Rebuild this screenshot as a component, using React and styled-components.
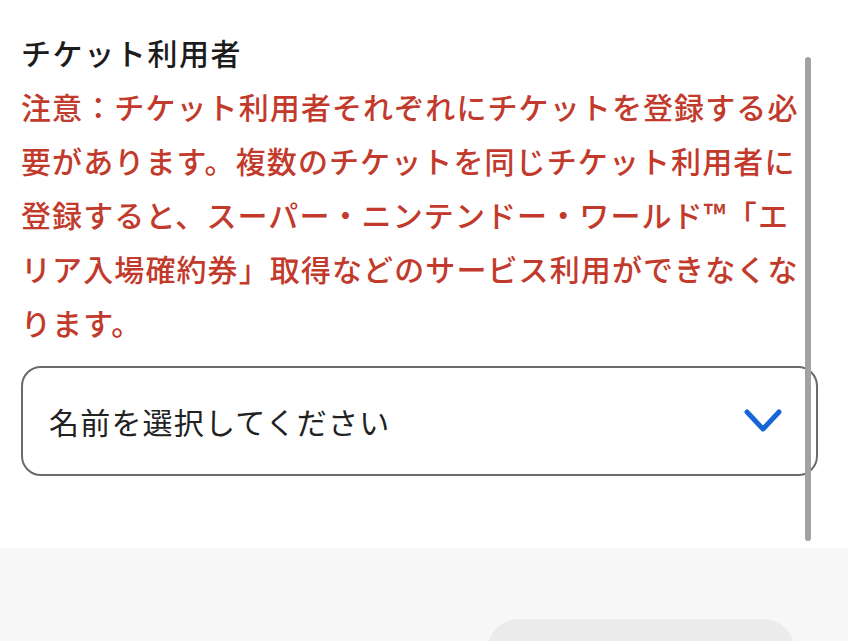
import React from 'react';
import styled, { createGlobalStyle } from 'styled-components';

const GlobalStyle = createGlobalStyle`
    html, body {
        margin: 0;
        padding: 0;
        background: #ffffff;
    }
    body {
        font-family: "Noto Sans CJK JP", "Noto Sans", sans-serif;
    }
`;

const Page = styled.div`
    display: flex;
    flex-direction: column;
    height: 641px;
    overflow: hidden;
`;

const Content = styled.section`
    position: relative;
    display: flex;
    flex-direction: column;
    padding: 25px 30px 72px 21px;
    background: #ffffff;
`;

const Heading = styled.h2`
    margin: 0;
    font-size: 30px;
    line-height: 54px;
    font-weight: 500;
    letter-spacing: 1.6px;
    color: #1c1c1c;
`;

const Notice = styled.p`
    margin: 0;
    font-size: 30px;
    line-height: 54px;
    font-weight: 500;
    letter-spacing: 1.1px;
    color: #c23a2b;
    white-space: nowrap;
`;

const Select = styled.button`
    display: flex;
    align-items: center;
    justify-content: space-between;
    margin-top: 17px;
    height: 110px;
    padding: 0 34px 0 26px;
    border: 2px solid #6a6a6a;
    border-radius: 20px;
    background: #ffffff;
    font-family: inherit;
    font-size: 30px;
    letter-spacing: 1.2px;
    color: #222222;
    cursor: pointer;
    text-align: left;
`;

const Chevron = styled.svg`
    width: 38px;
    height: 26px;
    flex-shrink: 0;
`;

const Scrollbar = styled.div`
    position: absolute;
    top: 57px;
    right: 37px;
    width: 6px;
    height: 484px;
    border-radius: 3px;
    background: #a2a2a2;
`;

const Footer = styled.footer`
    flex: 1;
    display: flex;
    justify-content: flex-end;
    padding: 71px 53px 0 0;
    background: #f7f7f7;
`;

const FooterButton = styled.div`
    width: 308px;
    height: 64px;
    border-radius: 32px;
    background: #ebebeb;
`;

const App = () => {
    return (
        <Page>
            <GlobalStyle />
            <Content>
                <Heading>チケット利用者</Heading>
                <Notice>
                    注意：チケット利用者それぞれにチケットを登録する必<br />
                    要があります。複数のチケットを同じチケット利用者に<br />
                    登録すると、スーパー・ニンテンドー・ワールド™「エ<br />
                    リア入場確約券」取得などのサービス利用ができなくな<br />
                    ります。
                </Notice>
                <Select type="button">
                    <span>名前を選択してください</span>
                    <Chevron viewBox="0 0 38 26" fill="none">
                        <path d="M3 4 L19 21 L35 4" stroke="#1766d6" strokeWidth="5" strokeLinecap="round" strokeLinejoin="round" />
                    </Chevron>
                </Select>
                <Scrollbar />
            </Content>
            <Footer>
                <FooterButton />
            </Footer>
        </Page>
    );
};

export default App;
